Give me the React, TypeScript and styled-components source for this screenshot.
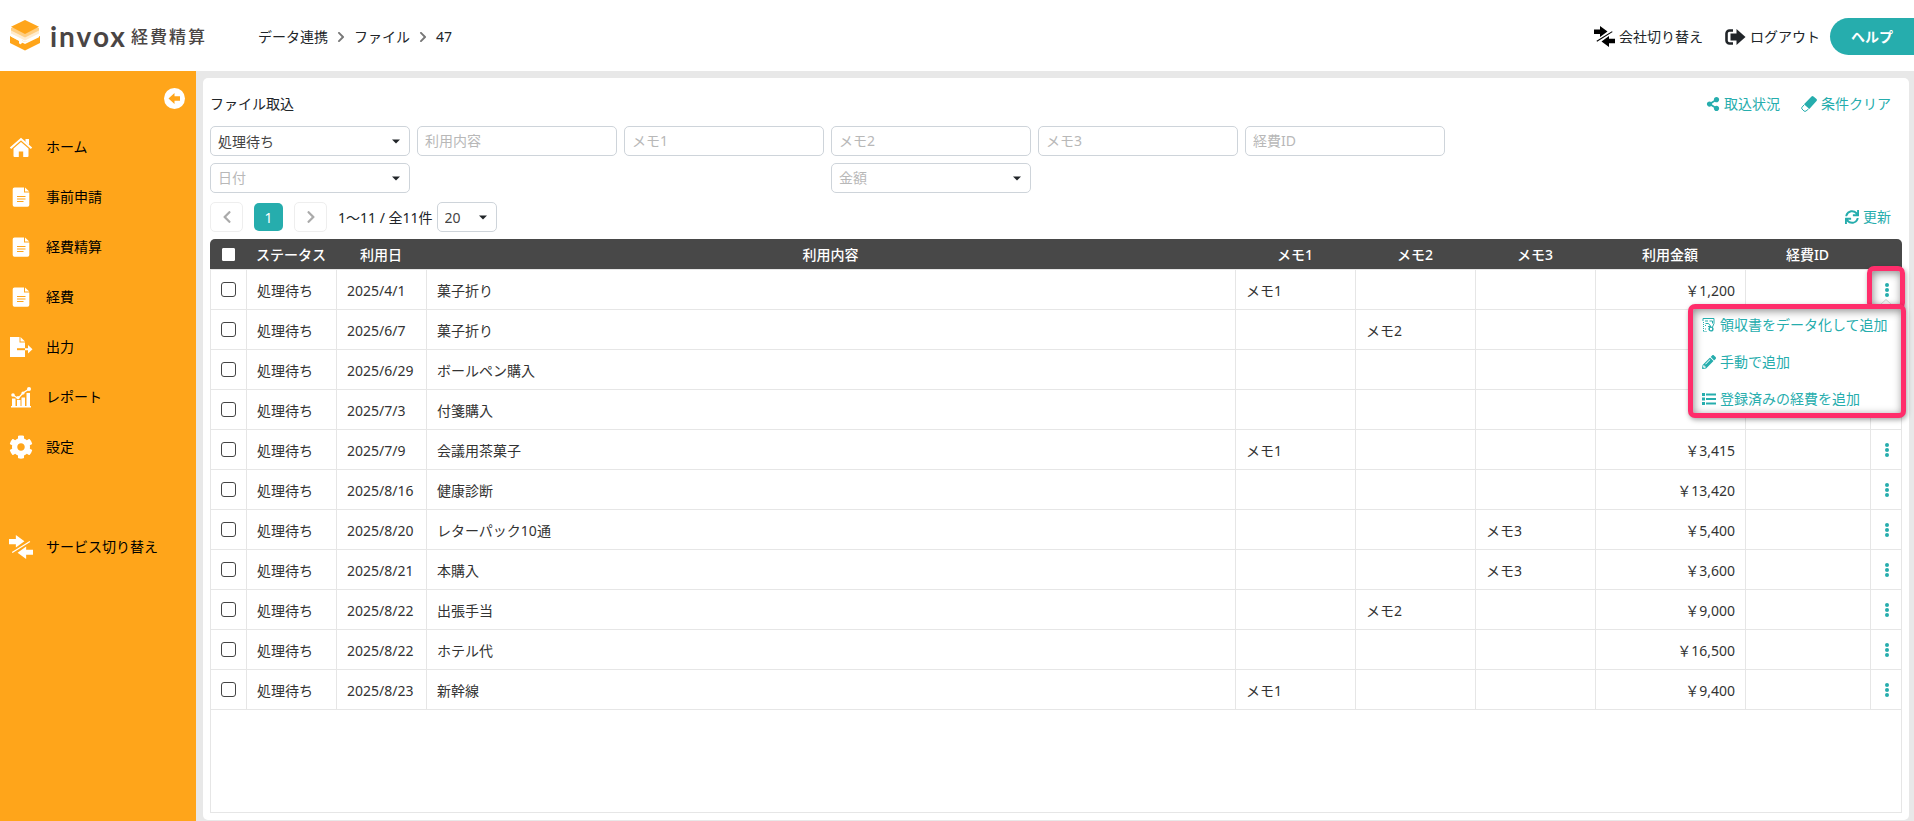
import React from 'react';
import styled, { createGlobalStyle } from 'styled-components';
import { FaChevronLeft, FaChevronRight, FaShareAlt, FaSync, FaPencilAlt, FaCog } from 'react-icons/fa';

const teal = '#26adad';
const line = '#e6e6e6';

const GlobalStyle = createGlobalStyle`
  *, *::before, *::after { box-sizing: border-box; }
  body {
    margin: 0;
    background: #e8e8e8;
    color: #212529;
    font: 14px/20px "Noto Sans", "Noto Sans CJK JP", sans-serif;
  }
  button, input, select { font: inherit; color: inherit; }
  button { cursor: pointer; }
  a { color: inherit; text-decoration: none; }
`;

const Page = styled.div`
  display: grid;
  grid-template-rows: 71px 1fr;
  min-height: 100vh;
`;

const TopBar = styled.header`
  display: flex;
  align-items: center;
  background: #fff;
  padding-top: 2px;
`;

const Brand = styled.a`
  display: flex;
  align-items: center;
  width: 258px;
  padding: 0 0 2px 10px;
  color: #4a4544;
`;

const BrandName = styled.span`
  margin-left: 10px;
  font: 700 28px/30px Lato, sans-serif;
  letter-spacing: 2px;
`;

const BrandProduct = styled.span`
  margin-left: 4px;
  font: 500 17px/30px "Noto Sans CJK JP", sans-serif;
  letter-spacing: 2px;
`;

const Breadcrumb = styled.nav`
  display: flex;
  align-items: center;
  gap: 7px;
  svg { color: #777; }
`;

const TopActions = styled.div`
  display: flex;
  align-items: center;
  gap: 22px;
  margin-left: auto;
`;

const IconButton = styled.button`
  display: inline-flex;
  align-items: center;
  gap: 4px;
  padding: 0;
  border: 0;
  background: none;
`;

const TealButton = styled(IconButton)`
  color: ${teal};
`;

const HelpButton = styled.button`
  width: 84px;
  height: 37px;
  margin-left: -12px;
  border: 0;
  border-radius: 19px 0 0 19px;
  background: ${teal};
  color: #fff;
  font-weight: 700;
`;

const Body = styled.div`
  display: grid;
  grid-template-columns: 196px minmax(0, 1fr);
`;

const Sidebar = styled.aside`
  display: flex;
  flex-direction: column;
  background: #ffa51a;
  color: #000;
`;

const Collapse = styled.button`
  display: flex;
  align-self: flex-end;
  margin: 17px 11px 13px 0;
  padding: 0;
  border: 0;
  background: none;
  color: #fff;
`;

const NavList = styled.nav`
  display: flex;
  flex-direction: column;
`;

const NavItem = styled.a<{ $apart?: boolean }>`
  display: flex;
  align-items: center;
  gap: 13px;
  height: 50px;
  padding-left: 9px;
  margin-top: ${p => (p.$apart ? '50px' : '0')};
  svg { width: 24px; height: 24px; color: #fff; }
`;

const Panel = styled.main`
  display: flex;
  flex-direction: column;
  margin: 7px 5px 1px 7px;
  padding: 16px 7px 7px;
  border-radius: 5px;
  background: #fff;
`;

const TitleRow = styled.div`
  display: flex;
  align-items: center;
  justify-content: space-between;
  height: 20px;
  margin-bottom: 12px;
`;

const Title = styled.h1`
  margin: 0;
  font-size: 14px;
  font-weight: 400;
`;

const TitleLinks = styled.div`
  display: flex;
  gap: 21px;
  padding-right: 11px;
`;

const Filters = styled.form`
  display: grid;
  grid-template-columns: repeat(6, 200px);
  gap: 7px;
  margin-bottom: 9px;
`;

const TextField = styled.input`
  width: 100%;
  height: 30px;
  padding: 0 7px 2px;
  border: 1px solid #ced4da;
  border-radius: 5px;
  background: #fff;
  &::placeholder { color: #b8b8b8; opacity: 1; }
`;

const SelectBox = styled.div<{ $column?: number; $width?: number }>`
  display: grid;
  align-items: center;
  width: ${p => (p.$width ? `${p.$width}px` : 'auto')};
  grid-column: ${p => p.$column ?? 'auto'};
  svg { grid-area: 1 / 1; justify-self: end; margin-right: 10px; pointer-events: none; }
`;

const Select = styled.select<{ $empty?: boolean }>`
  grid-area: 1 / 1;
  width: 100%;
  height: 30px;
  padding: ${p => (p.$empty ? '0 7px' : '2px 7px 0')};
  appearance: none;
  border: 1px solid #ced4da;
  border-radius: 5px;
  background: #fff;
  color: ${p => (p.$empty ? '#b8b8b8' : '#444')};
`;

const PagerRow = styled.div`
  display: flex;
  align-items: center;
  justify-content: space-between;
  height: 30px;
  margin-bottom: 7px;
  padding-right: 11px;
`;

const Pager = styled.div`
  display: flex;
  align-items: center;
  gap: 11px;
`;

const PageStep = styled.button`
  display: grid;
  place-items: center;
  width: 33px;
  height: 30px;
  padding: 0;
  border: 1px solid #eee;
  border-radius: 5px;
  background: #fff;
  color: #aaa;
`;

const PageNumber = styled.button`
  width: 29px;
  height: 28px;
  padding: 2px 0 0;
  border: 0;
  border-radius: 5px;
  background: ${teal};
  color: #fff;
`;

const PageSize = styled.div`
  display: flex;
  align-items: center;
  gap: 4px;
`;

const PageCount = styled.span`
  padding-top: 2px;
`;

const TableFrame = styled.div`
  position: relative;
  flex: 1;
  min-height: 574px;
  border: 1px solid ${line};
  border-top: 0;
  border-radius: 5px 5px 0 0;
`;

const Table = styled.table`
  width: calc(100% + 2px);
  margin: 0 -1px;
  table-layout: fixed;
  border-collapse: separate;
  border-spacing: 0;
`;

const HeadCell = styled.th`
  height: 30px;
  padding: 2px 2px 0 0;
  background: #484848;
  color: #fff;
  font-weight: 500;
  text-align: center;
  &:first-child { padding: 0; border-top-left-radius: 5px; }
  &:last-child { border-top-right-radius: 5px; }
`;

const Cell = styled.td<{ $align?: 'right' | 'center' }>`
  height: 40px;
  padding: ${p => (p.$align === 'center' ? '0' : '2px 10px 0')};
  border-top: 1px solid ${line};
  border-right: 1px solid ${line};
  text-align: ${p => p.$align ?? 'left'};
  color: #333;
  &:first-child { border-left: 1px solid ${line}; }
  tbody tr:last-child & { height: 41px; border-bottom: 1px solid ${line}; }
`;

const Check = styled.input<{ $head?: boolean }>`
  display: block;
  appearance: none;
  width: ${p => (p.$head ? '13px' : '15px')};
  height: ${p => (p.$head ? '13px' : '15px')};
  margin: 0 auto;
  border: 1px solid ${p => (p.$head ? '#fff' : '#444')};
  border-radius: ${p => (p.$head ? '1px' : '3px')};
  background: #fff;
`;

const MoreButton = styled.button`
  display: grid;
  place-items: center;
  width: 100%;
  height: 30px;
  padding: 1px 0 0 1px;
  border: 0;
  background: none;
  color: ${teal};
`;

const highlight = `
  border: 5px solid #ff2d6b;
  border-radius: 7px;
  box-shadow: 1px 2px 5px rgba(0, 0, 0, .35), inset 1px 2px 9px rgba(0, 0, 0, .45);
`;

const MoreHighlight = styled.div`
  position: absolute;
  top: 27px;
  right: -4px;
  display: flex;
  justify-content: center;
  align-items: flex-end;
  width: 38px;
  height: 44px;
  pointer-events: none;
  ${highlight}
`;

const RowMenu = styled.div`
  position: absolute;
  top: 65px;
  right: -5px;
  display: flex;
  flex-direction: column;
  gap: 17px;
  width: 218px;
  height: 114px;
  padding: 6px 9px;
  background: #fff;
  ${highlight}
`;

const SwitchIcon = ({ color = 'currentColor' }: { color?: string }) => (
  <svg width="21" height="21" viewBox="0 0 21 21" fill={color} aria-hidden="true">
    <path d="M0 3.500h6V0l7.500 5.500L6 11V8H0z" />
    <path d="M21 12.800v4.500h-6V21l-7.500-5.500 7.500-5.500v2.800z" />
    <path d="M2.500 14.800 18 5.200l.6.900L3.100 15.700z" />
  </svg>
);

const LogoutIcon = () => (
  <svg width="21" height="16" viewBox="0 0 21 16" aria-hidden="true">
    <path d="M8 1.500H4.500a3 3 0 0 0-3 3v7a3 3 0 0 0 3 3H8" fill="none" stroke="#212529" strokeWidth="2.600" />
    <path d="M5.500 4.500h6V0L20.500 8l-9 8v-4.500h-6z" fill="#212529" />
  </svg>
);

const CollapseIcon = () => (
  <svg width="21" height="21" viewBox="0 0 21 21" aria-hidden="true">
    <circle cx="10.500" cy="10.500" r="10.500" fill="#fff" />
    <path d="m4.500 10.500 6-5.500v3.300h5.500v4.400h-5.500V16z" fill="#ffa51a" />
  </svg>
);

const EraserIcon = () => (
  <svg width="16" height="16" viewBox="0 0 16 16" aria-hidden="true">
    <path d="M10.500.5a1.500 1.500 0 0 1 2 0l3 2.500a1.500 1.500 0 0 1 0 2L8.300 13 3 8.300z" fill="currentColor" />
    <path d="M3 9 1 11.200q-.8.900 0 1.800l2 2q1 .8 2 0L7.500 13" fill="none" stroke="currentColor" />
  </svg>
);

const ListIcon = () => (
  <svg width="14" height="12" viewBox="0 0 14 12" fill="currentColor" aria-hidden="true">
    <path d="M0 0h3v3H0zM4 .5h10v2H4zM0 4.500h3v3H0zM4 5h10v2H4zM0 9h3v3H0zM4 9.500h10v2H4z" />
  </svg>
);

const LogoMark = () => (
  <svg width="30" height="31" viewBox="0 0 30 31" aria-hidden="true">
    <path d="M0 16 9 21v3l3-2v-1.500l3 1.500 15-6v7l-15 7.500L0 23z" fill="#ffa51a" />
    <path d="M1 14.500 15 22l14-7.500v2.800L15 24l-2.500-1.200L10 24.500V21L1 16.500z" fill="#fff" />
    <path d="m1 10 14-4 14 4v3.500l-14 7-14-7z" fill="#ffecd0" />
    <path d="m1 8 14-4 14 4v2.500l-14 7-14-7z" fill="#ffce82" />
    <path d="M15 0 29 6.800l-14 7.200L1 6.800z" fill="#ffa51a" />
  </svg>
);

const HomeIcon = () => (
  <svg viewBox="0 0 24 24" fill="currentColor" aria-hidden="true">
    <path d="M12 7 4.500 13.600V21q0 1 1 1h4.300v-5.500h4.400V22h4.300q1 0 1-1v-7.400z" />
    <path d="m1.500 13.300 10.500-9.300 10.500 9.300" fill="none" stroke="currentColor" strokeWidth="2" />
    <path d="M16.500 4h3.500v6l-3.500-3z" />
  </svg>
);

const DocIcon = () => (
  <svg viewBox="0 0 24 24" aria-hidden="true">
    <path d="M5.500 2.500H15v5h5.300V20a1.800 1.800 0 0 1-1.800 1.800h-13A1.800 1.800 0 0 1 3.700 20V4.300a1.800 1.800 0 0 1 1.800-1.800z" fill="currentColor" />
    <path d="m16 2.500 4.300 4H16z" fill="currentColor" />
    <path d="M8 11.500h8.500M8 14h8.500M8 16.500h6.500" stroke="#ffa51a" strokeWidth="1" />
  </svg>
);

const ExportIcon = () => (
  <svg viewBox="0 0 24 24" aria-hidden="true">
    <path d="M1 2h9.500v5.500H16V22H1z" fill="currentColor" />
    <path d="m11.500 2 4.500 4.500h-4.500z" fill="currentColor" />
    <path d="M8 14.200h8" stroke="#ffa51a" strokeWidth="2" />
    <path d="M16 13.200h3V10l4.500 4.200-4.500 4.300v-3.300h-3z" fill="currentColor" />
  </svg>
);

const ReportIcon = () => (
  <svg viewBox="0 0 24 24" fill="currentColor" aria-hidden="true">
    <path d="M2 21h20v1.500H2zM3 13.500h3.500V21H3zM8 15h3.500v6H8zM12.500 12.500H16V21h-3.500zM17.500 8H21v13h-3.500z" />
    <path d="m4 10 5 3.500 5-5.500 6-4" fill="none" stroke="currentColor" strokeWidth="1.300" />
    <circle cx="4" cy="10" r="1.800" /><circle cx="9" cy="12.700" r="1.600" /><circle cx="14" cy="8" r="1.600" /><circle cx="20" cy="4" r="2" />
  </svg>
);

const ReceiptIcon = () => (
  <svg width="14" height="14" viewBox="0 0 14 14" fill="none" stroke="currentColor" aria-hidden="true">
    <path d="M1 3V.500h11v5L10.500 9M3 3h3M7.500 3h3v2.500M3.500 5.500h3l2 2.500" />
    <path d="M1.500 4v9.500M3.500 7v2M3.500 10.500v2M1.500 13.500h4" strokeDasharray="1 1" />
    <circle cx="9" cy="11" r="1.900" strokeWidth="1.400" /><path d="M6 8.500h3" />
  </svg>
);

const Caret = () => (
  <svg width="8" height="5" viewBox="0 0 8 5" aria-hidden="true"><path d="M0 .5h8L4 4.500z" fill="#212529" /></svg>
);

const Dots = () => (
  <svg width="4" height="14" viewBox="0 0 4 14" fill="currentColor" aria-hidden="true">
    <circle cx="2" cy="2" r="2" /><circle cx="2" cy="7" r="2" /><circle cx="2" cy="12" r="2" />
  </svg>
);

const MenuArrow = () => (
  <svg width="12" height="6" viewBox="0 0 12 6" aria-hidden="true">
    <path d="M0 6 6 .5 12 6" fill="#eee" stroke="#ccc" />
  </svg>
);

const navItems = [
  { label: 'ホーム', icon: <HomeIcon /> },
  { label: '事前申請', icon: <DocIcon /> },
  { label: '経費精算', icon: <DocIcon /> },
  { label: '経費', icon: <DocIcon /> },
  { label: '出力', icon: <ExportIcon /> },
  { label: 'レポート', icon: <ReportIcon /> },
  { label: '設定', icon: <FaCog /> },
  { label: 'サービス切り替え', icon: <SwitchIcon />, apart: true },
];

const columns = [
  { label: 'ステータス', width: 90 },
  { label: '利用日', width: 90 },
  { label: '利用内容' },
  { label: 'メモ1', width: 120 },
  { label: 'メモ2', width: 120 },
  { label: 'メモ3', width: 120 },
  { label: '利用金額', width: 150 },
  { label: '経費ID', width: 125 },
  { label: '', width: 31 },
];

type Entry = { date: string; content: string; memos?: [string, string, string]; amount: string };

const entries: Entry[] = [
  { date: '2025/4/1', content: '菓子折り', memos: ['メモ1', '', ''], amount: '￥1,200' },
  { date: '2025/6/7', content: '菓子折り', memos: ['', 'メモ2', ''], amount: '' },
  { date: '2025/6/29', content: 'ボールペン購入', amount: '' },
  { date: '2025/7/3', content: '付箋購入', amount: '' },
  { date: '2025/7/9', content: '会議用茶菓子', memos: ['メモ1', '', ''], amount: '￥3,415' },
  { date: '2025/8/16', content: '健康診断', amount: '￥13,420' },
  { date: '2025/8/20', content: 'レターパック10通', memos: ['', '', 'メモ3'], amount: '￥5,400' },
  { date: '2025/8/21', content: '本購入', memos: ['', '', 'メモ3'], amount: '￥3,600' },
  { date: '2025/8/22', content: '出張手当', memos: ['', 'メモ2', ''], amount: '￥9,000' },
  { date: '2025/8/22', content: 'ホテル代', amount: '￥16,500' },
  { date: '2025/8/23', content: '新幹線', memos: ['メモ1', '', ''], amount: '￥9,400' },
];

export default function App() {
  return (
    <>
      <GlobalStyle />
      <Page>
        <TopBar>
          <Brand href="#">
            <LogoMark />
            <BrandName>invox</BrandName>
            <BrandProduct>経費精算</BrandProduct>
          </Brand>
          <Breadcrumb aria-label="パンくず">
            <a href="#">データ連携</a>
            <FaChevronRight size={12} />
            <a href="#">ファイル</a>
            <FaChevronRight size={12} />
            <span>47</span>
          </Breadcrumb>
          <TopActions>
            <IconButton type="button"><SwitchIcon color="#000" />会社切り替え</IconButton>
            <IconButton type="button"><LogoutIcon />ログアウト</IconButton>
            <HelpButton type="button">ヘルプ</HelpButton>
          </TopActions>
        </TopBar>
        <Body>
          <Sidebar>
            <Collapse type="button" aria-label="メニューを閉じる"><CollapseIcon /></Collapse>
            <NavList>
              {navItems.map(item => (
                <NavItem key={item.label} href="#" $apart={item.apart}>{item.icon}{item.label}</NavItem>
              ))}
            </NavList>
          </Sidebar>
          <Panel>
            <TitleRow>
              <Title>ファイル取込</Title>
              <TitleLinks>
                <TealButton type="button"><FaShareAlt size={14} />取込状況</TealButton>
                <TealButton type="button"><EraserIcon />条件クリア</TealButton>
              </TitleLinks>
            </TitleRow>
            <Filters>
              <SelectBox>
                <Select aria-label="ステータス"><option>処理待ち</option></Select>
                <Caret />
              </SelectBox>
              {['利用内容', 'メモ1', 'メモ2', 'メモ3', '経費ID'].map(label => (
                <TextField key={label} type="text" placeholder={label} aria-label={label} />
              ))}
              <SelectBox $column={1}>
                <Select aria-label="日付" $empty><option>日付</option></Select>
                <Caret />
              </SelectBox>
              <SelectBox $column={4}>
                <Select aria-label="金額" $empty><option>金額</option></Select>
                <Caret />
              </SelectBox>
            </Filters>
            <PagerRow>
              <Pager>
                <PageStep type="button" aria-label="前へ"><FaChevronLeft size={14} /></PageStep>
                <PageNumber type="button">1</PageNumber>
                <PageStep type="button" aria-label="次へ"><FaChevronRight size={14} /></PageStep>
                <PageSize>
                  <PageCount>1～11 / 全11件</PageCount>
                  <SelectBox $width={60}>
                    <Select aria-label="表示件数"><option>20</option></Select>
                    <Caret />
                  </SelectBox>
                </PageSize>
              </Pager>
              <TealButton type="button"><FaSync size={14} />更新</TealButton>
            </PagerRow>
            <TableFrame>
              <Table>
                <colgroup>
                  <col width={37} />
                  {columns.map((column, i) => <col key={i} width={column.width} />)}
                </colgroup>
                <thead>
                  <tr>
                    <HeadCell><Check type="checkbox" aria-label="すべて選択" $head /></HeadCell>
                    {columns.map((column, i) => <HeadCell key={i}>{column.label}</HeadCell>)}
                  </tr>
                </thead>
                <tbody>
                  {entries.map((entry, i) => (
                    <tr key={i}>
                      <Cell $align="center"><Check type="checkbox" aria-label={`${entry.content}を選択`} /></Cell>
                      <Cell>処理待ち</Cell>
                      <Cell>{entry.date}</Cell>
                      <Cell>{entry.content}</Cell>
                      {(entry.memos ?? ['', '', '']).map((memo, j) => <Cell key={j}>{memo}</Cell>)}
                      <Cell $align="right">{entry.amount}</Cell>
                      <Cell />
                      <Cell $align="center"><MoreButton type="button" aria-label="操作"><Dots /></MoreButton></Cell>
                    </tr>
                  ))}
                </tbody>
              </Table>
              <MoreHighlight><MenuArrow /></MoreHighlight>
              <RowMenu>
                <TealButton type="button"><ReceiptIcon />領収書をデータ化して追加</TealButton>
                <TealButton type="button"><FaPencilAlt size={14} />手動で追加</TealButton>
                <TealButton type="button"><ListIcon />登録済みの経費を追加</TealButton>
              </RowMenu>
            </TableFrame>
          </Panel>
        </Body>
      </Page>
    </>
  );
}
